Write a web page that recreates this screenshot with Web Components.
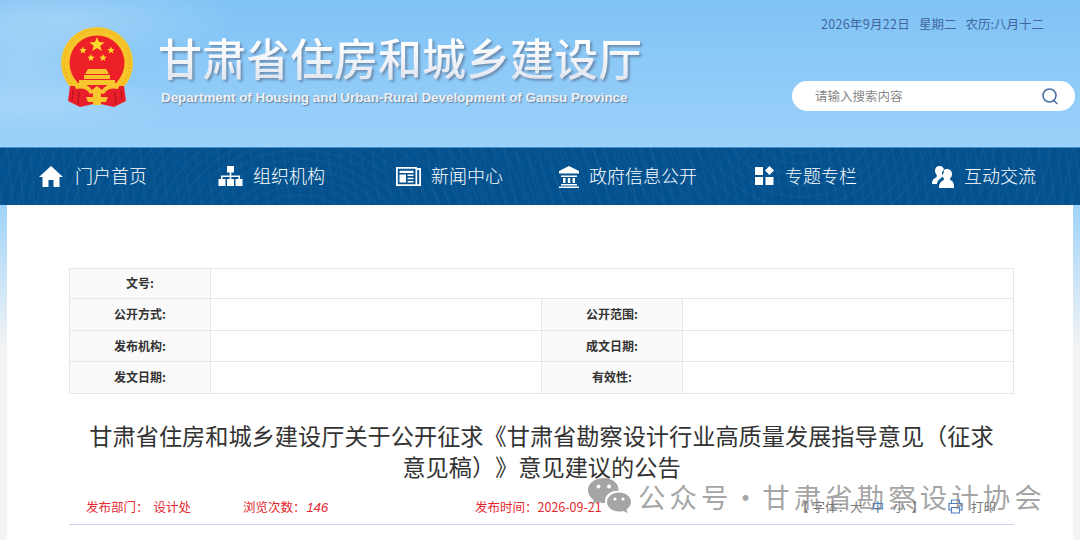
<!DOCTYPE html>
<html lang="zh">
<head>
<meta charset="utf-8">
<title>甘肃省住房和城乡建设厅</title>
<style>
  html, body { margin: 0; height: 100%; }
  body {
    font-family: "Noto Sans CJK SC", "Liberation Sans", sans-serif;
    overflow: hidden;
    background: linear-gradient(#9fd3fa 205px, #f4f4f4 350px);
  }
</style>
</head>
<body>
<gs-page>
  <gs-header slot="header" date="2026年9月22日" week="星期二" lunar="农历:八月十二"></gs-header>
  <gs-nav slot="nav">
    <gs-nav-item icon="home">门户首页</gs-nav-item>
    <gs-nav-item icon="org">组织机构</gs-nav-item>
    <gs-nav-item icon="news">新闻中心</gs-nav-item>
    <gs-nav-item icon="bank">政府信息公开</gs-nav-item>
    <gs-nav-item icon="grid">专题专栏</gs-nav-item>
    <gs-nav-item icon="users">互动交流</gs-nav-item>
  </gs-nav>
  <gs-article slot="main">
    <gs-meta-table></gs-meta-table>
    <h1 slot="title">甘肃省住房和城乡建设厅关于公开征求《甘肃省勘察设计行业高质量发展指导意见（征求意见稿）》意见建议的公告</h1>
    <gs-info-bar slot="info"></gs-info-bar>
    <gs-watermark slot="overlay">公众号 · 甘肃省勘察设计协会</gs-watermark>
  </gs-article>
</gs-page>

<script>
class GsPage extends HTMLElement {
  connectedCallback() {
    this.attachShadow({mode: 'open'});
    this.shadowRoot.innerHTML = `
    <style>
      :host { display: flex; flex-direction: column; height: 540px; }
      .main { flex: 1; display: flex; padding: 0 7px; min-height: 0; }
    </style>
    <slot name="header"></slot>
    <slot name="nav"></slot>
    <div class="main"><slot name="main"></slot></div>
    `
  }
}

class GsHeader extends HTMLElement {
  connectedCallback() {
    this.attachShadow({mode: 'open'});
    this.shadowRoot.innerHTML = `
    <style>
      :host {
        display: flex;
        height: 147px;
        box-sizing: border-box;
        padding: 20px 5px 0 50px;
        background:
          radial-gradient(ellipse 170px 40px at 70px 18px, rgba(255,255,255,.22), transparent),
          radial-gradient(ellipse 90px 70px at 20px 60px, rgba(255,255,255,.16), transparent),
          radial-gradient(ellipse 150px 30px at 40px 105px, rgba(255,255,255,.14), transparent),
          linear-gradient(#80c3f5, #9bd1fa);
      }
      .emblem { width: 90px; height: 95px; flex: none; }
      .brand { margin-left: 18px; margin-top: 7px; flex: 1; }
      .cn {
        font-size: 44px;
        line-height: 60px;
        font-weight: 500;
        white-space: nowrap;
        background: linear-gradient(#ffffff 25%, #dfe4ee 90%);
        -webkit-background-clip: text;
        background-clip: text;
        color: transparent;
        filter: drop-shadow(2px 2px 1px rgba(90,110,140,.65));
      }
      .en {
        margin: 3px 0 0 3px;
        font: bold 13.4px/16px "Liberation Sans", sans-serif;
        color: #eef1f6;
        white-space: nowrap;
        text-shadow: 1px 1px 1px rgba(90,110,140,.8);
      }
      .side { width: 283px; display: flex; flex-direction: column; }
      .date {
        display: flex;
        gap: 9px;
        justify-content: flex-end;
        padding-right: 31px;
        font-size: 12.5px;
        line-height: 20px;
        margin-top: -6px;
        color: #41669f;
      }
      .date .d { letter-spacing: .3px; }
      gs-search { margin-top: 47px; }
    </style>
    <svg class="emblem" viewBox="0 0 90 95">
      <circle cx="47" cy="43" r="36" fill="#f5c52a"/>
      <circle cx="47" cy="43" r="33" fill="none" stroke="#e3a417" stroke-width="1" stroke-dasharray="2 2"/>
      <circle cx="47" cy="43" r="27.500" fill="#ee2027"/>
      <path d="M20 66 L18 81 L30 87 L39 85 L47 83 L55 85 L64 87 L76 81 L74 66 Z" fill="#e81f2b"/>
      <path d="M23 70 L22 80 M29 72 L28 84 M65 72 L66 84 M71 70 L72 80" stroke="#b5141f" stroke-width="1.2"/>
      <g fill="#fadb2c">
        <polygon points="47,17 49,22 54.500,22.400 50.300,25.800 51.700,31 47,28.100 42.300,31 43.700,25.800 39.500,22.400 45,22"/>
        <polygon points="33,26.500 34,29 36.700,29.200 34.600,30.900 35.300,33.500 33,32 30.700,33.500 31.400,30.900 29.300,29.200 32,29"/>
        <polygon points="61,26.500 62,29 64.700,29.200 62.600,30.900 63.300,33.500 61,32 58.700,33.500 59.400,30.900 57.300,29.200 60,29"/>
        <polygon points="41,34 42,36.500 44.700,36.700 42.600,38.400 43.300,41 41,39.500 38.700,41 39.400,38.400 37.300,36.700 40,36.500"/>
        <polygon points="53,34 54,36.500 56.700,36.700 54.600,38.400 55.300,41 53,39.500 50.700,41 51.400,38.400 49.300,36.700 52,36.500"/>
      </g>
      <path d="M38 49 H56 L59 54 H35 Z M34 55 H60 V59 H34 Z M29 60 H65 V65 H29 Z" fill="#f7c62f"/>
      <path d="M24 64 Q36 62 42 70 L47 66 L52 70 Q58 62 70 64 L68 69 Q58 67 54 74 L47 72 L40 74 Q36 67 26 69 Z" fill="#f7c62f"/>
      <path d="M36 77 H58 L56 82 H38 Z M43 72 H51 V85 H43 Z" fill="#f7c62f"/>
    </svg>
    <div class="brand">
      <div class="cn">甘肃省住房和城乡建设厅</div>
      <div class="en">Department of Housing and Urban-Rural Development of Gansu Province</div>
    </div>
    <div class="side">
      <div class="date">
        <span class="d">${this.getAttribute('date')}</span>
        <span>${this.getAttribute('week')}</span>
        <span>${this.getAttribute('lunar')}</span>
      </div>
      <gs-search placeholder="请输入搜索内容"></gs-search>
    </div>
    `
  }
}

class GsSearch extends HTMLElement {
  connectedCallback() {
    this.attachShadow({mode: 'open'});
    this.shadowRoot.innerHTML = `
    <style>
      :host {
        display: flex;
        align-items: center;
        justify-content: space-between;
        height: 30px;
        box-sizing: border-box;
        padding: 0 16px 0 23px;
        border-radius: 15px;
        background: #fff;
        font-size: 12.5px;
        color: #888;
      }
      span { margin-top: -2px; }
      svg { width: 18px; height: 18px; }
    </style>
    <span>${this.getAttribute('placeholder')}</span>
    <svg viewBox="0 0 18 18" fill="none" stroke="#4a6fa5" stroke-width="1.6">
      <circle cx="8.500" cy="8.500" r="6.500"/>
      <path d="M12.500 13.500 L16 16.500" stroke-linecap="round"/>
    </svg>
    `
  }
}

class GsNav extends HTMLElement {
  connectedCallback() {
    this.attachShadow({mode: 'open'});
    this.shadowRoot.innerHTML = `
    <style>
      :host {
        display: grid;
        grid-template-columns: 179px 178px 163px 196px 177px 1fr;
        align-items: center;
        height: 58px;
        box-sizing: border-box;
        padding-left: 39px;
        border-top: 1px solid #4a90c8;
        background:
          repeating-radial-gradient(circle at 300px 120px, rgba(255,255,255,.025) 0 2px, transparent 2px 9px),
          repeating-radial-gradient(circle at 800px -40px, rgba(255,255,255,.025) 0 2px, transparent 2px 11px),
          #03528f;
      }
    </style>
    <slot></slot>
    `
  }
}

const NAV_ICONS = {
  home: {w: 24, gap: 12, d: 'M12 0 L24 11 L20.500 11 L20.500 21 L14.500 21 L14.500 14 L9.500 14 L9.500 21 L3.500 21 L3.500 11 L0 11 Z'},
  org: {w: 25, gap: 10, d: 'M9 0 H16 V6.500 H13.300 V9.500 H22 V13 H24.500 V20 H17.500 V13 H20.500 V11 H13.300 V13 H16 V20 H9 V13 H11.700 V11 H4.500 V13 H7.500 V20 H0.500 V13 H3 V9.500 H11.700 V6.500 H9 Z'},
  news: {w: 25, gap: 10, d: 'M0 1 H21 V2 H25 V20 H0 Z M1.800 2.800 V18.200 H19.500 V2.800 Z M21.200 4 V18.200 H23.200 V4 Z M3.500 4.800 H17.500 V7 H3.500 Z M3.500 8.500 H10 V16.500 H3.500 Z M11.500 8.500 H17.500 V10 H11.500 Z M11.500 11.700 H17.500 V13.200 H11.500 Z M11.500 15 H17.500 V16.500 H11.500 Z'},
  bank: {w: 20, gap: 10, d: 'M10 0 L20 5 V7.500 H0 V5 Z M2 9.500 H18 V11 H2 Z M4 12 H6.500 V17 H4 Z M8.800 12 H11.300 V17 H8.800 Z M13.500 12 H16 V17 H13.500 Z M2 18 H18 V19.500 H2 Z M0 20.500 H20 V22.500 H0 Z'},
  grid: {w: 19, gap: 11, d: 'M0 1 H8 V9 H0 Z M14.500 0 L19 4.500 L14.500 9 L10 4.500 Z M0 11 H8 V19 H0 Z M10.500 11 H18.500 V19 H10.500 Z'},
  users: {w: 22, gap: 10, d: 'M7.500 0 C10.500 0 12 2 12 4.500 C12 6 11.500 7.500 10.500 8.500 C10 9 10 10 10.500 10.500 L8 13 C5.500 14.500 5 17 5 18 H0 C0 14 1.500 12.500 4 11.500 C5 11 5 9.500 4.500 8.500 C3.500 7.500 3 6 3 4.500 C3 2 4.800 0 7.500 0 Z M15 3 C18 3 20 5.200 20 8 C20 10 19.200 11.300 18.200 12.200 C17.800 13 18 14 19 14.500 C21 15.300 22 17 22 22 H7 C7 17.500 8.500 15.500 11 14.500 C12 14 12.200 13 11.800 12.200 C10.800 11.300 10 10 10 8 C10 5.200 12 3 15 3 Z'}
};

class GsNavItem extends HTMLElement {
  connectedCallback() {
    const icon = NAV_ICONS[this.getAttribute('icon')]
    this.attachShadow({mode: 'open'});
    this.shadowRoot.innerHTML = `
    <style>
      :host {
        display: flex;
        align-items: center;
        gap: ${icon.gap}px;
        font-size: 18px;
        font-weight: 300;
        color: #fff;
        white-space: nowrap;
      }
      svg { height: 22px; flex: none; fill: #fff; fill-rule: evenodd; }
      .t { padding-bottom: 4px; }
    </style>
    <svg width="${icon.w}" viewBox="0 0 ${icon.w} 22"><path d="${icon.d}"/></svg>
    <div class="t"><slot></slot></div>
    `
  }
}

class GsArticle extends HTMLElement {
  connectedCallback() {
    this.attachShadow({mode: 'open'});
    this.shadowRoot.innerHTML = `
    <style>
      :host {
        display: block;
        flex: 1;
        position: relative;
        box-sizing: border-box;
        padding: 63px 59px 0 62px;
        background: #fff;
      }
      ::slotted(h1) {
        margin: 26px 0 0;
        padding: 0 16px;
        font-size: 23.2px;
        line-height: 31px;
        font-weight: 400;
        text-align: center;
        text-spacing-trim: space-all;
        color: #333;
      }
    </style>
    <slot></slot>
    <slot name="title"></slot>
    <slot name="info"></slot>
    <slot name="overlay"></slot>
    `
  }
}

class GsMetaTable extends HTMLElement {
  connectedCallback() {
    this.attachShadow({mode: 'open'});
    this.shadowRoot.innerHTML = `
    <style>
      :host { display: block; }
      table {
        width: 945px;
        border-collapse: collapse;
        table-layout: fixed;
        font-size: 12px;
        color: #333;
      }
      td { border: 1px solid #e6e6e6; padding: 0 0 2px; text-align: center; }
      .k { background: #fafafa; font-weight: 700; }
      .r1 { height: 30px; }
      .r2 { height: 32px; }
      .r3 { height: 31px; }
      .r4 { height: 32px; }
    </style>
    <table>
      <colgroup>
        <col style="width:141px"><col style="width:331px"><col style="width:141px"><col>
      </colgroup>
      <tr class="r1"><td class="k">文号:</td><td colspan="3"></td></tr>
      <tr class="r2"><td class="k">公开方式:</td><td></td><td class="k">公开范围:</td><td></td></tr>
      <tr class="r3"><td class="k">发布机构:</td><td></td><td class="k">成文日期:</td><td></td></tr>
      <tr class="r4"><td class="k">发文日期:</td><td></td><td class="k">有效性:</td><td></td></tr>
    </table>
    `
  }
}

class GsInfoBar extends HTMLElement {
  connectedCallback() {
    this.attachShadow({mode: 'open'});
    this.shadowRoot.innerHTML = `
    <style>
      :host {
        display: grid;
        grid-template-columns: 157px 232px 327px 1fr;
        align-items: center;
        width: 945px;
        height: 34px;
        margin-top: 9px;
        box-sizing: border-box;
        padding: 0 0 2px 17px;
        border-bottom: 1px solid #c9d5ea;
        font-size: 12.5px;
        color: #e5262d;
      }
      .dept span { margin-left: 5px; }
      em { margin-left: 1px; font: italic 13px "Liberation Sans", sans-serif; }
      .tools { display: flex; align-items: center; margin-left: -6px; color: #777; white-space: nowrap; }
      .tools .open { margin-right: 4px; }
      .tools .size { margin-left: 9px; }
      .tools .close { margin-left: 6px; }
      .tools .cur { color: #3a78c2; }
      .tools svg { width: 15px; height: 15px; margin: 0 8px 0 24px; }
    </style>
    <div class="dept">发布部门：<span>设计处</span></div>
    <div>浏览次数：<em>146</em></div>
    <div>发布时间：2026-09-21</div>
    <div class="tools">
      <span class="open">【</span><span>字体：</span><span>大</span><span class="size cur">中</span><span class="size">小</span><span class="close">】</span>
      <svg viewBox="0 0 15 15" fill="none" stroke="#4a7fc0" stroke-width="1.2">
        <path d="M3.500 4 V1 H11.500 V4 M3 11 H1 V4.500 H14 V11 H12 M3.500 8.500 H11.500 V14 H3.500 Z"/>
      </svg>
      <span>打印</span>
    </div>
    `
  }
}

class GsWatermark extends HTMLElement {
  connectedCallback() {
    this.attachShadow({mode: 'open'});
    this.shadowRoot.innerHTML = `
    <style>
      :host {
        position: absolute;
        left: 581px;
        top: 271px;
        display: flex;
        align-items: center;
        gap: 7px;
        font-family: "Noto Sans CJK SC", sans-serif;
        font-size: 27.5px;
        letter-spacing: 4px;
        word-spacing: -11px;
        line-height: 40px;
        color: rgba(130,130,130,.72);
        white-space: nowrap;
      }
      svg { width: 43px; height: 36px; flex: none; }
    </style>
    <svg viewBox="0 0 43 36">
      <path d="M16 0 C24 0 30.500 5 30.500 11.500 C30.500 12 30.500 12.300 30.400 12.700 C23 12 17 17 17 23 C17 23.700 17.100 24.300 17.200 25 C14 25.200 11.500 24.500 9.500 23.800 L4.500 26.500 L5.800 22 C2.200 19.700 0 16 0 12 C0 5.300 7 0 16 0 Z" fill="rgba(130,130,130,.72)"/>
      <path d="M31 14.500 C37.500 14.500 43 18.700 43 24 C43 27 41.200 29.500 38.500 31.300 L39.500 35 L35.500 33 C34 33.400 32.500 33.600 31 33.600 C24.400 33.600 19 29.300 19 24 C19 18.700 24.400 14.500 31 14.500 Z" fill="rgba(130,130,130,.72)"/>
      <g fill="#fff">
        <circle cx="10.500" cy="8.500" r="2"/><circle cx="21" cy="8.500" r="2"/>
        <circle cx="27" cy="21" r="1.600"/><circle cx="35" cy="21" r="1.600"/>
      </g>
    </svg>
    <slot></slot>
    `
  }
}

window.customElements.define("gs-search", GsSearch)
window.customElements.define("gs-header", GsHeader)
window.customElements.define("gs-nav-item", GsNavItem)
window.customElements.define("gs-nav", GsNav)
window.customElements.define("gs-meta-table", GsMetaTable)
window.customElements.define("gs-info-bar", GsInfoBar)
window.customElements.define("gs-watermark", GsWatermark)
window.customElements.define("gs-article", GsArticle)
window.customElements.define("gs-page", GsPage)
</script>
</body>
</html>
